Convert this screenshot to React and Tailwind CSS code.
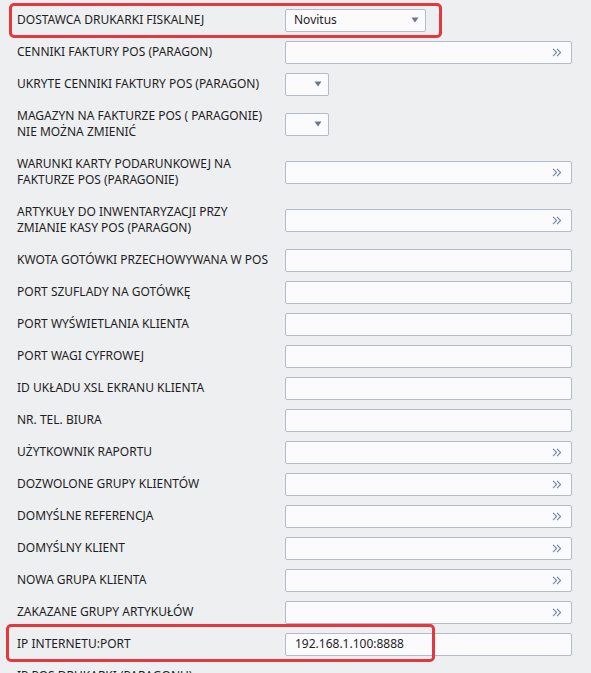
import React from 'react';

const rows = [
  { label: 'DOSTAWCA DRUKARKI FISKALNEJ', type: 'select', value: 'Novitus' },
  { label: 'CENNIKI FAKTURY POS (PARAGON)', type: 'lookup' },
  { label: 'UKRYTE CENNIKI FAKTURY POS (PARAGON)', type: 'small' },
  { label: ['MAGAZYN NA FAKTURZE POS ( PARAGONIE)', 'NIE MOŻNA ZMIENIĆ'], type: 'small' },
  { label: ['WARUNKI KARTY PODARUNKOWEJ NA', 'FAKTURZE POS (PARAGONIE)'], type: 'lookup' },
  { label: ['ARTYKUŁY DO INWENTARYZACJI PRZY', 'ZMIANIE KASY POS (PARAGON)'], type: 'lookup' },
  { label: 'KWOTA GOTÓWKI PRZECHOWYWANA W POS', type: 'text' },
  { label: 'PORT SZUFLADY NA GOTÓWKĘ', type: 'text' },
  { label: 'PORT WYŚWIETLANIA KLIENTA', type: 'text' },
  { label: 'PORT WAGI CYFROWEJ', type: 'text' },
  { label: 'ID UKŁADU XSL EKRANU KLIENTA', type: 'text' },
  { label: 'NR. TEL. BIURA', type: 'text' },
  { label: 'UŻYTKOWNIK RAPORTU', type: 'lookup' },
  { label: 'DOZWOLONE GRUPY KLIENTÓW', type: 'lookup' },
  { label: 'DOMYŚLNE REFERENCJA', type: 'lookup' },
  { label: 'DOMYŚLNY KLIENT', type: 'lookup' },
  { label: 'NOWA GRUPA KLIENTA', type: 'lookup' },
  { label: 'ZAKAZANE GRUPY ARTYKUŁÓW', type: 'lookup' },
  { label: 'IP INTERNETU:PORT', type: 'text', value: '192.168.1.100:8888' },
  { label: ['IP POS DRUKARKI (PARAGONU)', 'PORT DRUKARKI'], type: 'disabled' },
];

const Caret = () => (
  <svg width="8" height="6" viewBox="0 0 8 6" className="shrink-0">
    <path d="M0.5 0.5 L7.5 0.5 L4 5.5 Z" fill="#6f7787" />
  </svg>
);

const Chevrons = () => (
  <svg width="10" height="9" viewBox="0 0 10 9" className="shrink-0">
    <path d="M1 0.8 L4.6 4.5 L1 8.2 M5 0.8 L8.6 4.5 L5 8.2" fill="none" stroke="#7584ad" strokeWidth="1.1" />
  </svg>
);

function Field({ type, value }) {
  const base = 'h-[23px] rounded-[2px] border border-[#b3bac9] bg-[#fbfbfe] flex items-center text-[12px] text-[#1e1e1e]';
  if (type === 'select') {
    return (
      <div className={`${base} w-[141px] pl-[8px] pr-[6px] justify-between`}>
        <span>{value}</span>
        <Caret />
      </div>
    );
  }
  if (type === 'small') {
    return (
      <div className={`${base} w-[44px] pr-[6px] justify-end`}>
        <Caret />
      </div>
    );
  }
  if (type === 'lookup') {
    return (
      <div className={`${base} w-[287px] pr-[9px] justify-end`}>
        <Chevrons />
      </div>
    );
  }
  if (type === 'disabled') {
    return <div className="h-[23px] w-[287px] rounded-[2px] border border-dashed border-[#b3bac9] bg-[#f3f4f7]" />;
  }
  return (
    <div className={`${base} w-[287px] pl-[9px]`}>
      {value}
    </div>
  );
}

export default function App() {
  return (
    <div
      className="relative min-h-screen overflow-hidden bg-[#eeeff1] text-[#1e1e1e]"
      style={{ fontFamily: '"Noto Sans", "Open Sans", sans-serif' }}
    >
      <div className="flex flex-col pt-[4px] pl-[17px]">
        {rows.map((row, i) => {
          const two = Array.isArray(row.label);
          return (
            <div key={i} className={`flex items-center ${two ? 'h-12' : 'h-8'}`}>
              <div className="w-[268px] shrink-0 text-[12px] leading-[16px]">
                {two ? (
                  <>
                    <div>{row.label[0]}</div>
                    <div>{row.label[1]}</div>
                  </>
                ) : (
                  row.label
                )}
              </div>
              <Field type={row.type} value={row.value} />
            </div>
          );
        })}
      </div>

      {/* red highlight frames */}
      <div className="pointer-events-none absolute left-[9px] top-[3px] h-[35px] w-[433px] rounded-[5px] border-[3px] border-[#e4383e]" />
      <div className="pointer-events-none absolute left-[6px] top-[624px] h-[38px] w-[429px] rounded-[5px] border-[3px] border-[#e4383e]" />
    </div>
  );
}
